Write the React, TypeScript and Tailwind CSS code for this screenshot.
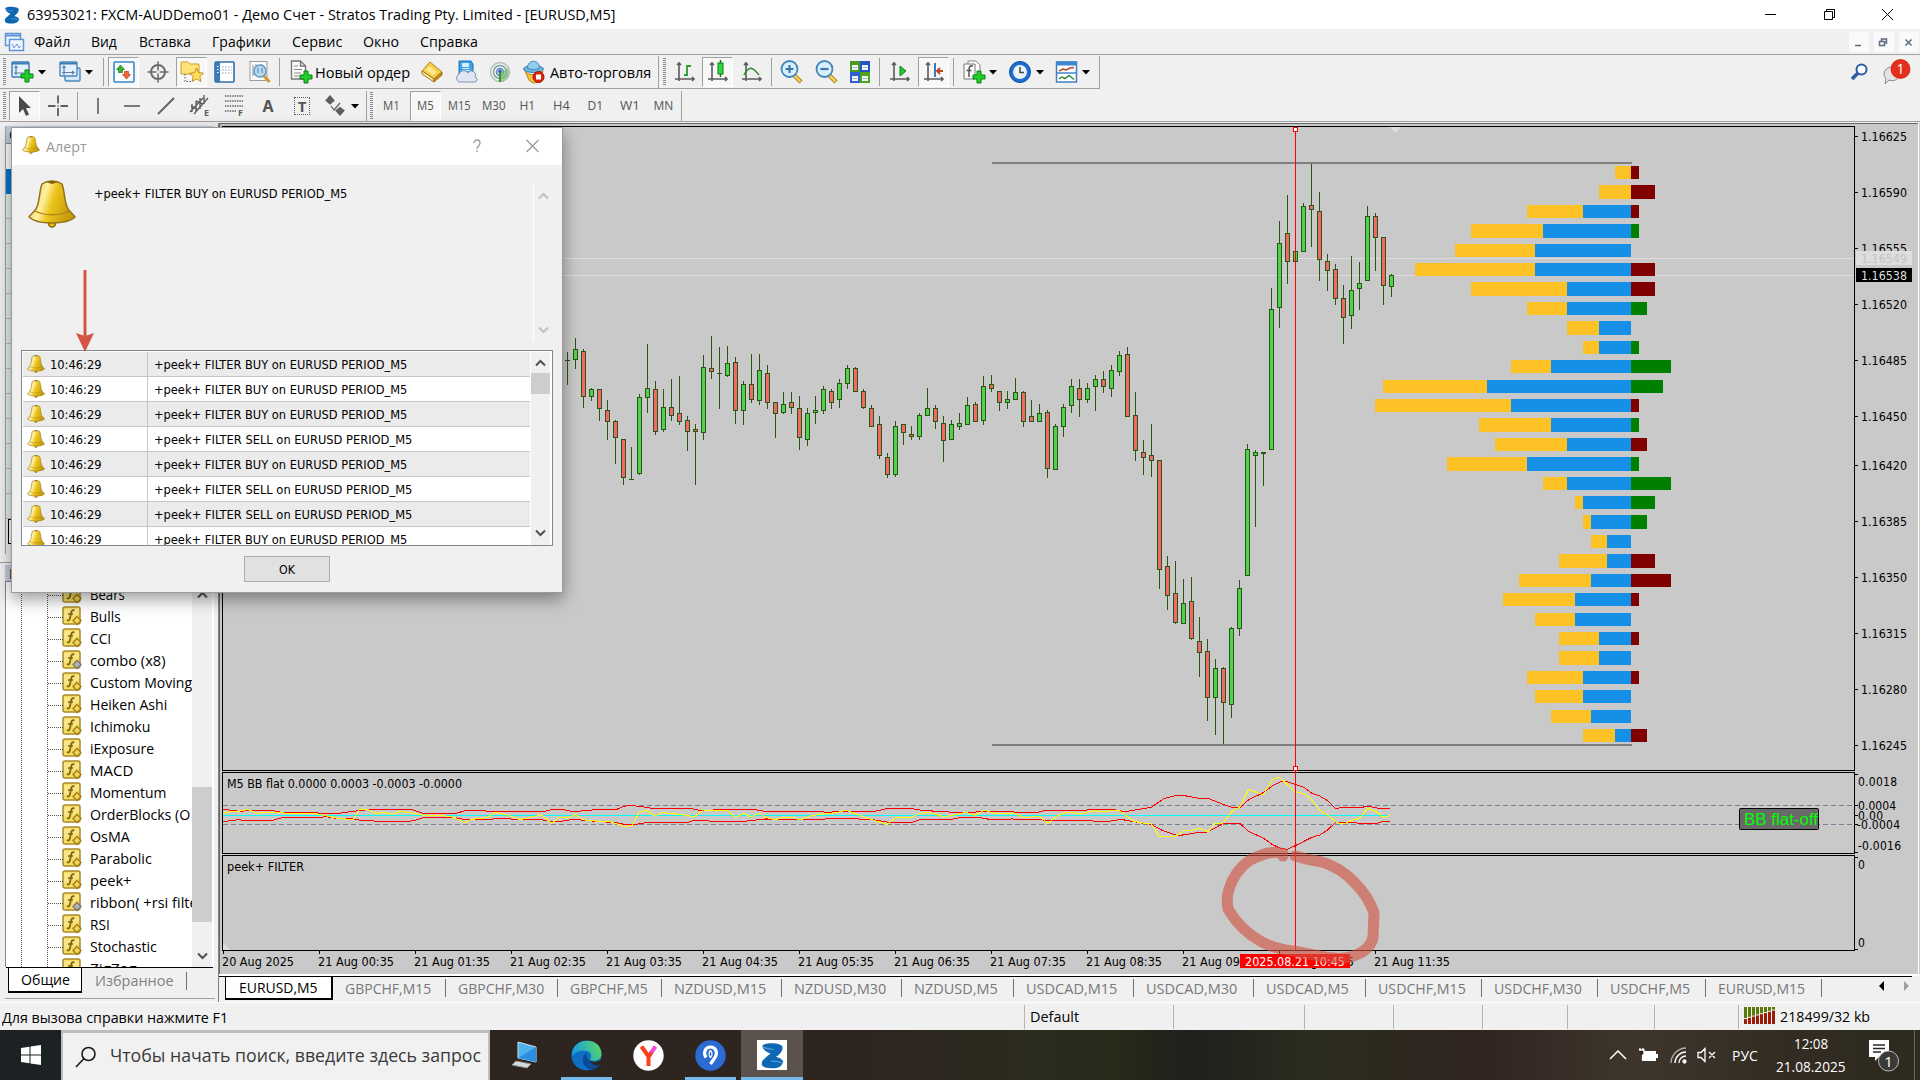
import { ReactNode, useLayoutEffect, useRef, useState } from 'react';

/* ---------- helpers ---------- */

type FitProps = { w: number; children: string; className?: string };

// one line of text squeezed or stretched to a fixed advance width
const Fit = ({ w, children, className = '' }: FitProps) => {
  const ref = useRef<HTMLSpanElement>(null);
  const [scale, setScale] = useState(1);

  useLayoutEffect(() => {
    if (ref.current) setScale(w / ref.current.offsetWidth);
  }, [w, children]);

  return (
    <span className="block shrink-0" style={{ width: w }}>
      <span
        ref={ref}
        className={`inline-block origin-left whitespace-pre align-top ${className}`}
        style={{ transform: `scaleX(${scale})` }}
      >
        {children}
      </span>
    </span>
  );
};

const Cell = ({ className, children }: { className: string; children?: ReactNode }) => (
  <div className={`flex h-full shrink-0 items-center justify-center ${className}`}>{children}</div>
);

const Pressed = ({ className = 'w-[31px]', children }: { className?: string; children: ReactNode }) => (
  <div
    className={`flex h-[30px] shrink-0 items-center justify-center border border-t-[#a0a0a0] border-l-[#a0a0a0] border-r-white border-b-white bg-[#f7f7f7] ${className}`}
  >
    {children}
  </div>
);

const Sep = ({ className = '' }: { className?: string }) => (
  <div className={`h-[28px] w-px shrink-0 bg-[#a0a0a0] ${className}`} />
);

const Edge = ({ className = '' }: { className?: string }) => (
  <div className={`h-full w-px shrink-0 bg-[#a0a0a0] ${className}`} />
);

const Grip = ({ className }: { className: string }) => (
  <Cell className={className}>
    <svg width="3" height="28" viewBox="0 0 3 28">
      <path d="M1.500 0V28" stroke="#8c8c8c" strokeWidth="3" strokeDasharray="1 1" />
    </svg>
  </Cell>
);

const Caret = ({ className = 'w-[12px]' }: { className?: string }) => (
  <Cell className={className}>
    <svg width="8" height="5" viewBox="0 0 8 5">
      <path d="M0 0H8L4 4.500Z" fill="#000" />
    </svg>
  </Cell>
);

const Ico = ({ children, size = 24 }: { children: ReactNode; size?: number }) => (
  <svg width={size} height={size} viewBox="0 0 24 24" fill="none" className="shrink-0">
    {children}
  </svg>
);

const Plus = ({ x, y }: { x: number; y: number }) => (
  <path
    d={`M${x + 4} ${y}h4v4h4v4h-4v4h-4v-4h-4v-4h4z`}
    fill="#1fd02c"
    stroke="#0a7d12"
    strokeWidth="1"
  />
);

/* ---------- toolbar icons ---------- */

const NewChartIcon = () => (
  <Ico>
    <rect x="2" y="2" width="17" height="15" rx="1" fill="#e4f0fb" stroke="#3a7cb8" strokeWidth="1.400" />
    <path d="M2 3.500h17" stroke="#3a7cb8" strokeWidth="2" />
    <path d="M6 6v9M4 13h10M4.500 8L6 6l1.500 2" stroke="#5b7fa6" strokeWidth="1.200" />
    <Plus x={11} y={10} />
  </Ico>
);

const ProfilesIcon = () => (
  <Ico>
    <rect x="7" y="8" width="15" height="13" rx="1" fill="#d7e9f8" stroke="#4d86b8" strokeWidth="1.400" />
    <rect x="2" y="2" width="17" height="14" rx="1" fill="#e4f0fb" stroke="#4d86b8" strokeWidth="1.400" />
    <path d="M2 3.500h17" stroke="#3a7cb8" strokeWidth="2" />
    <path d="M6 6v9M4 12.500h12M4.500 8L6 6l1.500 2M14 11l2 1.500-2 1.500" stroke="#5b7fa6" strokeWidth="1.200" />
  </Ico>
);

const MarketIcon = () => (
  <Ico>
    <rect x="2" y="2" width="20" height="20" rx="1" fill="#fdfdfd" stroke="#3d86c6" strokeWidth="1.600" />
    <path d="M8.500 5l4 4.500h-2v3h-4v-3h-2z" fill="#35b135" stroke="#157a15" strokeWidth=".7" />
    <path d="M14.500 19l-4-4.500h2v-3h4v3h2z" fill="#f0643c" stroke="#b93a17" strokeWidth=".7" />
  </Ico>
);

const TargetIcon = () => (
  <Ico>
    <circle cx="12" cy="12" r="7" stroke="#6c6c6c" strokeWidth="2" />
    <path d="M12 1.500v9M12 13.500v9M1.500 12h9M13.500 12h9" stroke="#6c6c6c" strokeWidth="1.600" />
  </Ico>
);

const Star = ({ x, y }: { x: number; y: number }) => (
  <path
    transform={`translate(${x} ${y})`}
    d="M7 0l2 4.700 5 .5-3.700 3.300 1.100 5L7 10.900 2.600 13.500l1.100-5L0 5.200l5-.5z"
    fill="#ffdc5c"
    stroke="#b58a16"
    strokeWidth=".9"
  />
);

const NavigatorIcon = () => (
  <Ico>
    <path d="M1 2h7l2 2h9v10H1z" fill="#ffe27a" stroke="#cba02c" />
    <path d="M5 14v7.500h6" stroke="#555" strokeDasharray="1.500 1.500" />
    <Star x={9.5} y={8} />
  </Ico>
);

const DataIcon = () => (
  <Ico>
    <rect x="2" y="2" width="19" height="20" rx="1" fill="#fff" stroke="#2f6ea8" strokeWidth="1.600" />
    <rect x="2" y="2" width="5" height="20" fill="#3a7cb8" />
    <path d="M9 7h10M9 10h10M9 13h10" stroke="#9db8d2" strokeDasharray="2 1" />
    <path d="M4 6.500h1.500M4 9.500h1.500M4 12.500h1.500" stroke="#fff" />
  </Ico>
);

const TesterIcon = () => (
  <Ico>
    <rect x="2" y="1.500" width="17" height="19" fill="#fafafa" stroke="#9c9c9c" />
    <path d="M5 5v11M8 4v9M14 4v6" stroke="#7d8ea0" />
    <path d="M15.500 15.500l6 6.500" stroke="#d59a2a" strokeWidth="3" />
    <circle cx="12" cy="11" r="6" fill="#b8dbf2" stroke="#6898be" strokeWidth="1.500" />
    <path d="M10 8v5M14 8v5" stroke="#4b82b0" />
  </Ico>
);

const OrderIcon = () => (
  <Ico>
    <path d="M2.500 1h9l5 5v13h-14z" fill="#fbfbfb" stroke="#777" strokeWidth="1.400" />
    <path d="M11.500 1v5h5" stroke="#777" strokeWidth="1.400" />
    <path d="M5 6h4M5 9.500h8M5 13h7M5 16h5" stroke="#888" strokeWidth="1.200" />
    <Plus x={11} y={11} />
  </Ico>
);

const BookIcon = () => (
  <Ico>
    <path d="M10 2l12 10-8 7L2 11z" fill="#f6cf4b" stroke="#b3801a" />
    <path d="M2 11v3l12 8v-3z" fill="#fff3c4" stroke="#a36f12" />
    <path d="M14 19l8-7v3l-8 7z" fill="#c98f1d" stroke="#a36f12" />
    <path d="M9 6l8 6-4 3-7-5z" fill="#ffe892" />
  </Ico>
);

const CloudIcon = () => (
  <Ico>
    <path d="M5 1h12l2 3v10H5z" fill="#3ea2e6" stroke="#1a6eb4" />
    <path d="M8.500 3.500h6v3h-6zM8.500 8.500h7M8.500 10.500h7" fill="#d8eefb" stroke="#d8eefb" />
    <path d="M5 22a4.500 4.500 0 010-8 5 5 0 019-1 4 4 0 017 4 2.500 2.500 0 01-1 5z" fill="#dfe6f2" stroke="#8095b8" />
  </Ico>
);

const SignalIcon = () => (
  <Ico>
    <circle cx="12" cy="12" r="9.500" stroke="#b9bfc0" strokeWidth="1.500" />
    <circle cx="12" cy="12" r="6.500" stroke="#7fa6a0" strokeWidth="1.500" />
    <circle cx="12" cy="12" r="3.500" stroke="#5d86c8" strokeWidth="1.500" />
    <path d="M12 12v10a10 10 0 008-14z" fill="#6fba6b" opacity=".6" />
    <circle cx="12" cy="11.500" r="2" fill="#3b66b0" />
    <path d="M12 12v10" stroke="#2f9b2f" strokeWidth="2" />
  </Ico>
);

const AutoIcon = () => (
  <Ico>
    <path d="M3 11c4 5 12 5 18 0l-2 8c-4 5-9 5-12 1z" fill="#f4c53b" stroke="#b98615" />
    <ellipse cx="11.500" cy="9" rx="10" ry="3.500" fill="#6bb4dd" stroke="#3c86b1" />
    <path d="M5.500 8c0-9 12-9 12 0-3 2-9 2-12 0z" fill="#8fcdee" stroke="#3c86b1" />
    <circle cx="16.500" cy="17" r="5.500" fill="#e2230c" stroke="#a31505" />
    <rect x="14" y="14.500" width="5" height="5" fill="#fff" />
  </Ico>
);

const Axes = () => (
  <path d="M6 3v18M2 19h19M4 5l2-2 2 2M19 17l2 2-2 2" stroke="#5b5b5b" strokeWidth="1.600" />
);

const BarsIcon = () => (
  <Ico>
    <Axes />
    <path d="M14 5v11M14 6h4M11 15h3" stroke="#249b2c" strokeWidth="1.800" />
  </Ico>
);

const CandleIcon = () => (
  <Ico>
    <Axes />
    <path d="M14.500 0v17" stroke="#0d7a15" strokeWidth="1.500" />
    <rect x="12" y="3" width="5" height="11" fill="#2edb3b" stroke="#0d7a15" />
  </Ico>
);

const LineIcon = () => (
  <Ico>
    <Axes />
    <path d="M4 15c5-9 8-9 15 0" stroke="#2b8a2f" strokeWidth="1.500" />
  </Ico>
);

const ZoomIcon = ({ plus }: { plus?: boolean }) => (
  <Ico>
    <path d="M14 14l8 8" stroke="#a87a1a" strokeWidth="4.500" />
    <path d="M14 14l7.500 7.500" stroke="#f7d24f" strokeWidth="2.500" />
    <circle cx="10.500" cy="9" r="8" fill="#d9effb" stroke="#3f86bb" strokeWidth="1.800" />
    <path d={plus ? 'M6.500 9h8M10.500 5v8' : 'M6.500 9h8'} stroke="#3a79ad" strokeWidth="2.200" />
  </Ico>
);

const TileIcon = () => (
  <Ico>
    <rect x="2" y="1" width="10" height="11" fill="#4c9a1f" />
    <rect x="12" y="1" width="10" height="11" fill="#2353c4" />
    <rect x="2" y="12" width="10" height="11" fill="#2f5fd0" />
    <rect x="12" y="12" width="10" height="11" fill="#4fa31f" />
    <path d="M4 5h6v5H4zM14 5h6v5h-6zM4 16h6v5H4zM14 16h6v5h-6z" fill="#eef4fb" />
    <path d="M5 7.500h4M15 7.500h4M5 18.500h4M15 18.500h4" stroke="#9fb3c8" />
  </Ico>
);

const ScrollIcon = () => (
  <Ico>
    <Axes />
    <path d="M12 6l6 5-6 5z" fill="#23c531" stroke="#12851c" />
  </Ico>
);

const ShiftIcon = () => (
  <Ico>
    <Axes />
    <path d="M13 3v14" stroke="#1f6fb0" strokeWidth="1.800" />
    <path d="M21 11h-6M18 8l-3 3 3 3" stroke="#c4401a" strokeWidth="1.800" />
  </Ico>
);

const IndicatorsIcon = () => (
  <Ico>
    <path d="M6 1h8l4 4v12H6z" fill="#fff" stroke="#888" />
    <path d="M2 4h11v15H2z" fill="#fbfbfb" stroke="#777" />
    <path d="M11 6c-3-1-4 1-4 4v7M4.500 10.500h5" stroke="#555" strokeWidth="1.500" />
    <Plus x={11} y={11} />
  </Ico>
);

const ClockIcon = () => (
  <Ico>
    <circle cx="12" cy="12" r="10.500" fill="#1a6fd0" stroke="#0d4a96" />
    <circle cx="12" cy="12" r="7" fill="#eaf4fd" />
    <path d="M12 7v5.500h4" stroke="#444" strokeWidth="1.500" />
  </Ico>
);

const TemplateIcon = () => (
  <Ico>
    <rect x="1.500" y="2" width="20" height="20" fill="#fff" stroke="#3d7fc2" strokeWidth="1.500" />
    <path d="M1 3.500h21" stroke="#3d86d0" strokeWidth="4" />
    <path d="M1 13h21" stroke="#3d86d0" strokeWidth="1.500" />
    <path d="M4 11l4-2 3 1 4-2 4-.5" stroke="#b3472a" strokeWidth="1.500" />
    <path d="M4 19l3-2 3 1.500 4-3 5 4" stroke="#2f8a3a" strokeWidth="1.500" />
  </Ico>
);

const BellIcon = ({ size = 18 }: { size?: number }) => (
  <svg width={size} height={size} viewBox="0 0 48 48" className="shrink-0">
    <defs>
      <linearGradient id="bell" x1="0" x2="1" y1="0" y2=".3">
        <stop offset="0" stopColor="#e8c43a" />
        <stop offset=".4" stopColor="#fff0a0" />
        <stop offset=".6" stopColor="#ecc51c" />
        <stop offset="1" stopColor="#c79a0c" />
      </linearGradient>
    </defs>
    <circle cx="24" cy="43.500" r="3.500" fill="#e8bb1a" stroke="#8a6a10" strokeWidth="1.500" />
    <path
      d="M14 4C20 0 28 0 34 4c3 8 2 18 6 25 2 3 5 5 7 8-8 8-38 8-46 0 2-3 5-5 7-8 4-7 3-17 6-25z"
      fill="url(#bell)"
      stroke="#94721a"
      strokeWidth="1.500"
    />
    <path d="M7 31c10 5 24 5 34 0" fill="none" stroke="#a9851a" strokeWidth="1.300" />
    <path d="M19 2.500l5-2 5 2-5 1.500z" fill="#8a5f0a" />
  </svg>
);

const LogoIcon = ({ size }: { size: number }) => (
  <svg width={size} height={size} viewBox="0 0 20 20" className="shrink-0">
    <path
      d="M2.500 3c0-3 15-3 15 1 0 3-2 5-5 7 2 .5 4.500 1.500 5.500 3.500-1 4-4 5-8 5-5 0-8-1-8-3.500 0-3 4-5 6.500-7.500C7 8 3 6.500 2.500 3z"
      fill="#0d67b2"
    />
    <path d="M3 3.500c3 2 5 1.500 8 2M17 15.500c-3-1.500-5-1-8-1.500" stroke="#5ba3dc" strokeWidth=".8" fill="none" />
  </svg>
);

const Chevron = ({ up, color = '#505050' }: { up?: boolean; color?: string }) => (
  <svg width="11" height="8" viewBox="0 0 11 8" fill="none" className="shrink-0">
    <path d={up ? 'M1 6.500L5.500 2L10 6.500' : 'M1 1.500L5.500 6L10 1.500'} stroke={color} strokeWidth="2" />
  </svg>
);

/* ---------- bars above the workspace ---------- */

const TitleBar = () => (
  <div className="flex h-[29px] items-center bg-white text-[15px] text-black">
    <div className="ml-[3px] flex w-[24px]">
      <LogoIcon size={18} />
    </div>
    <Fit w={588}>63953021: FXCM-AUDDemo01 - Демо Счет - Stratos Trading Pty. Limited - [EURUSD,M5]</Fit>
    <svg className="mr-[26px] mb-px ml-auto" width="130" height="14" viewBox="0 0 130 14" fill="none" stroke="#000">
      <path d="M1 7.500h11" />
      <path d="M60.500 4.500h8v8h-8zM62.500 4.500v-2h8v8h-2" />
      <path d="M118 2l11 11M129 2l-11 11" />
    </svg>
  </div>
);

const menu: { label: string; w: number; ml: string }[] = [
  { label: 'Файл', w: 36, ml: 'ml-[9px]' },
  { label: 'Вид', w: 26, ml: 'ml-[21px]' },
  { label: 'Вставка', w: 52, ml: 'ml-[22px]' },
  { label: 'Графики', w: 59, ml: 'ml-[21px]' },
  { label: 'Сервис', w: 50, ml: 'ml-[21px]' },
  { label: 'Окно', w: 36, ml: 'ml-[21px]' },
  { label: 'Справка', w: 58, ml: 'ml-[21px]' },
];

const MenuBar = () => (
  <div className="flex h-[26px] items-center border-b border-[#a0a0a0] text-[15px]">
    <svg className="ml-[4px]" width="21" height="20" viewBox="0 0 21 20" fill="none" stroke="#5f93d8">
      <rect x="1.500" y="1.500" width="15" height="12" fill="#e9f2fd" strokeWidth="1.500" />
      <path d="M1 3.500h16" strokeWidth="2" />
      <rect x="5.500" y="7.500" width="14" height="11" fill="#f4f8fe" strokeWidth="1.500" />
      <path d="M8 12l2 4 3-4 2 4 2-2" />
    </svg>
    {menu.map((m) => (
      <div key={m.label} className={m.ml}>
        <Fit w={m.w}>{m.label}</Fit>
      </div>
    ))}
    <div className="mr-px ml-auto flex gap-[5px]">
      {['M4 12.500h6', 'M3.500 8.500h5v4h-5zM5.500 8v-2h5v4h-2', 'M4.500 6.500l6 6M10.500 6.500l-6 6'].map((d) => (
        <svg key={d} width="20" height="20" viewBox="-2 -1 20 20" className="bg-[#fafafa]" fill="none">
          <path d={d} stroke="#5a6b80" strokeWidth="1.500" />
        </svg>
      ))}
    </div>
  </div>
);

const MainToolbar = () => (
  <div className="flex h-[34px] items-center">
    <div className="flex h-full items-center border-b border-[#a0a0a0] pt-px text-[15px]">
      <Grip className="w-[8px]" />
      <Cell className="w-[28px]"><NewChartIcon /></Cell>
      <Caret />
      <Cell className="ml-[9px] w-[26px]"><ProfilesIcon /></Cell>
      <Caret />
      <Sep className="ml-[8px]" />
      <Pressed className="ml-[4px] w-[31px]"><MarketIcon /></Pressed>
      <Cell className="w-[37px]"><TargetIcon /></Cell>
      <Pressed><NavigatorIcon /></Pressed>
      <Cell className="w-[36px]"><DataIcon /></Cell>
      <Cell className="w-[34px]"><TesterIcon /></Cell>
      <Sep className="ml-[2px]" />
      <Cell className="ml-[8px] w-[26px]"><OrderIcon /></Cell>
      <div className="ml-px"><Fit w={95}>Новый ордер</Fit></div>
      <Cell className="ml-[5px] w-[34px]"><BookIcon /></Cell>
      <Cell className="w-[34px]"><CloudIcon /></Cell>
      <Cell className="w-[34px]"><SignalIcon /></Cell>
      <Cell className="w-[33px]"><AutoIcon /></Cell>
      <Fit w={101}>Авто-торговля</Fit>
      <Edge className="ml-[7px]" />
      <Grip className="ml-[2px] w-[6px]" />
      <Cell className="w-[35px]"><BarsIcon /></Cell>
      <Pressed><CandleIcon /></Pressed>
      <Cell className="w-[38px]"><LineIcon /></Cell>
      <Sep />
      <Cell className="w-[38px]"><ZoomIcon plus /></Cell>
      <Cell className="w-[32px]"><ZoomIcon /></Cell>
      <Cell className="w-[35px]"><TileIcon /></Cell>
      <Sep className="ml-[2px]" />
      <Cell className="w-[40px]"><ScrollIcon /></Cell>
      <Pressed className="-ml-[2px] w-[31px]"><ShiftIcon /></Pressed>
      <Sep className="ml-[4px]" />
      <Cell className="ml-[7px] w-[26px]"><IndicatorsIcon /></Cell>
      <Caret />
      <Cell className="ml-[8px] w-[26px]"><ClockIcon /></Cell>
      <Caret className="ml-px w-[12px]" />
      <Cell className="ml-[8px] w-[26px]"><TemplateIcon /></Cell>
      <Caret />
      <Edge className="ml-[7px]" />
    </div>
    <div className="mr-[8px] ml-auto flex items-center gap-[12px]">
      <svg width="20" height="20" viewBox="0 0 20 20" fill="none">
        <path d="M8 11l-6 6" stroke="#2c5aa8" strokeWidth="3.500" />
        <circle cx="11.500" cy="7.500" r="5" fill="#fff" stroke="#2c5aa8" strokeWidth="2" />
      </svg>
      <svg width="30" height="28" viewBox="0 0 30 28">
        <path d="M2 16a8 7 0 0116 0c0 5-6 8-11 6l-4 4 1-5c-1-1-2-3-2-5z" fill="#e4e4e4" stroke="#8c8c8c" />
        <circle cx="18.500" cy="11" r="10" fill="#e2301c" />
        <text x="18.500" y="16" textAnchor="middle" fontSize="14" fill="#fff">1</text>
      </svg>
    </div>
  </div>
);

const g = '#5e5e5e';

const DrawToolbar = () => (
  <div className="flex h-[33px] items-center border-b border-[#a0a0a0] pt-[2px] text-[12px] font-medium text-[#555]">
    <Grip className="w-[8px]" />
    <Pressed className="ml-px w-[31px]">
      <Ico><path d="M6 2v17l4-4 3 7 3-1.500-3-6.500h5z" fill="#4a4a4a" /></Ico>
    </Pressed>
    <Cell className="w-[35px]">
      <Ico><path d="M12 1.500v8M12 14v8M2 12h7.500M14.500 12h7.500M11.500 12h1" stroke={g} strokeWidth="1.800" /></Ico>
    </Cell>
    <Sep className="ml-[2px]" />
    <Cell className="ml-[3px] w-[34px]">
      <Ico><path d="M12 4v16" stroke={g} strokeWidth="1.600" /></Ico>
    </Cell>
    <Cell className="w-[34px]">
      <Ico><path d="M4 12h16" stroke={g} strokeWidth="1.600" /></Ico>
    </Cell>
    <Cell className="w-[34px]">
      <Ico><path d="M4 20L20 4" stroke={g} strokeWidth="1.800" /></Ico>
    </Cell>
    <Cell className="w-[34px]">
      <Ico>
        <path d="M2 18L15 4M6 20L20 4M4 10v8M8 7v11M12 4v11M16 1v9M3 12l6 3M8 7l7 3" stroke={g} strokeWidth="1.400" />
        <text x="16" y="22" fontSize="9" fontWeight="bold" fill={g}>E</text>
      </Ico>
    </Cell>
    <Cell className="w-[34px]">
      <Ico>
        <path d="M3 2h18M3 7h18M3 12h18M3 17h11" stroke={g} strokeWidth="1.400" strokeDasharray="1.400 1" />
        <text x="16" y="22" fontSize="9" fontWeight="bold" fill={g}>F</text>
      </Ico>
    </Cell>
    <Cell className="w-[34px] font-['Noto_Sans','Open_Sans',sans-serif] text-[16px] font-bold">A</Cell>
    <Cell className="w-[34px]">
      <div className="flex h-[18px] w-[16px] items-center justify-center border border-dotted border-[#5e5e5e] text-[15px] leading-none font-bold">
        T
      </div>
    </Cell>
    <Cell className="w-[32px]">
      <Ico>
        <path d="M7 2l4 4.500L7 10 3 6.500zM17 21l4-4.500-4-3-4 3zM8 12l3 4 6-7" stroke={g} strokeWidth="1.200" />
        <path d="M7 2l4 4.500L7 10 3 6.500zM17 21l4-4.500-4-3-4 3z" fill={g} />
      </Ico>
    </Cell>
    <Caret className="-ml-[2px] w-[12px]" />
    <Edge className="ml-[5px]" />
    <Grip className="ml-px w-[6px]" />
    <Cell className="w-[34px]"><Fit w={17}>M1</Fit></Cell>
    <Pressed className="ml-[2px] w-[31px]"><Fit w={17}>M5</Fit></Pressed>
    <Cell className="ml-px w-[35px]"><Fit w={23}>M15</Fit></Cell>
    <Cell className="w-[33px]"><Fit w={24}>M30</Fit></Cell>
    <Cell className="w-[35px]"><Fit w={16}>H1</Fit></Cell>
    <Cell className="w-[33px]"><Fit w={17}>H4</Fit></Cell>
    <Cell className="w-[35px]"><Fit w={16}>D1</Fit></Cell>
    <Cell className="w-[34px]"><Fit w={20}>W1</Fit></Cell>
    <Cell className="w-[33px]"><Fit w={20}>MN</Fit></Cell>
    <Edge className="ml-px" />
  </div>
);

/* ---------- left column ---------- */

const tree: { name: string; w: number; gray?: boolean }[] = [
  { name: 'Bears', w: 35 },
  { name: 'Bulls', w: 31 },
  { name: 'CCI', w: 21 },
  { name: 'combo (x8)', w: 75, gray: true },
  { name: 'Custom Moving', w: 102 },
  { name: 'Heiken Ashi', w: 77 },
  { name: 'Ichimoku', w: 60 },
  { name: 'iExposure', w: 64 },
  { name: 'MACD', w: 43 },
  { name: 'Momentum', w: 76 },
  { name: 'OrderBlocks (O', w: 100 },
  { name: 'OsMA', w: 40 },
  { name: 'Parabolic', w: 62 },
  { name: 'peek+', w: 41 },
  { name: 'ribbon( +rsi filte', w: 108, gray: true },
  { name: 'RSI', w: 20 },
  { name: 'Stochastic', w: 67 },
  { name: 'ZigZag', w: 47 },
];

const FunctionIcon = ({ gray }: { gray?: boolean }) => (
  <svg width="20" height="20" viewBox="0 0 20 20" className="shrink-0">
    <rect x="1" y="1" width="17" height="17" rx="2" fill="#f5dc62" stroke="#a88a2c" strokeWidth="1.500" />
    <path d="M2 3h15v5L2 13z" fill="#fbeb9b" opacity=".6" />
    <path d="M12.500 4.500c-2-1-3 0-3.500 3L8 12c-.5 2.500-1.500 3-3 2M6 8h5" fill="none" stroke="#7d6010" strokeWidth="1.700" />
    <path
      d="M15 10.500l4 4-4 4-4-4z"
      fill={gray ? '#b5b5b5' : '#f3d558'}
      stroke={gray ? '#777' : '#a07d18'}
      strokeWidth="1.300"
    />
  </svg>
);

const MarketWatch = () => (
  <div className="ml-[5px] h-[428px] w-[208px] border-l border-[#a0a0a0]">
    <div className="h-[17px] bg-[#bfcddb] pl-[3px] text-[14px] leading-[17px]">Обзор рынка</div>
    <div className="h-[26px] border-t border-[#828790] bg-white" />
    <div className="h-[25px] bg-[#0078d7]" />
    {Array.from({ length: 13 }, (_, i) => (
      <div key={i} className="h-[25px] border-b border-[#c0c0c0] bg-[#e6f2e6]" />
    ))}
    <div className="ml-[2px] h-[25px] w-[70px] border border-black bg-white" />
  </div>
);

const Navigator = () => (
  <div className="flex h-[436px] flex-col border-t border-[#a0a0a0] pt-[2px]">
    <div className="ml-[5px] flex h-[16px] w-[208px] items-center bg-[#bfcddb] pl-[4px] text-[14px]">Навигатор</div>
    <div className="ml-[5px] flex h-[386px] w-[209px] border border-r-0 border-b-0 border-[#828790] bg-white">
      <div className="relative w-[186px] overflow-hidden">
        <svg className="absolute top-0 left-0" width="60" height="386" viewBox="6 583 60 386" stroke="#555" fill="none">
          <path d="M21.500 583V969M47.500 583V969" strokeDasharray="1 1" />
          {tree.map((t, i) => (
            <path key={t.name} d={`M48 ${596.5 + i * 22}H63`} strokeDasharray="1 1" />
          ))}
        </svg>
        <div className="pt-px pl-[56px]">
          {tree.map((t) => (
            <div key={t.name} className="flex h-[22px] items-center gap-[8px] text-[15px]">
              <FunctionIcon gray={t.gray} />
              <Fit w={t.w}>{t.name}</Fit>
            </div>
          ))}
        </div>
      </div>
      <div className="flex w-[20px] flex-col items-center bg-[#f0f0f0] pt-[9px] pb-[7px]">
        <Chevron up />
        <div className="mt-[188px] h-[135px] w-[20px] bg-[#cdcdcd]" />
        <div className="mt-auto">
          <Chevron />
        </div>
      </div>
    </div>
    <div className="ml-[6px] flex h-[27px] w-[207px] border-t border-black text-[15px]">
      <div className="ml-[2px] flex h-[25px] w-[74px] items-center justify-center border-x border-b-2 border-black bg-white">
        <Fit w={49}>Общие</Fit>
      </div>
      <div className="ml-[13px] flex h-[24px] items-center text-[#808080]">
        <Fit w={79}>Избранное</Fit>
      </div>
      <div className="mt-[4px] ml-[12px] h-[18px] w-px bg-[#707070]" />
    </div>
  </div>
);

/* ---------- chart ---------- */

// high, body top, body bottom, low (1 = rising, 0 = falling)
const candles: [number, number, number, number, 0 | 1][] = [
  [352, 360, 361, 385, 1], [338, 349, 360, 369, 1], [349, 351, 397, 408, 0], [388, 389, 397, 401, 1],
  [389, 389, 409, 421, 0], [400, 410, 422, 440, 0], [420, 421, 438, 464, 0], [439, 439, 478, 485, 0],
  [447, 479, 480, 480, 1], [394, 397, 474, 475, 1], [344, 388, 398, 413, 1], [381, 389, 432, 435, 0],
  [389, 407, 430, 432, 1], [379, 407, 416, 421, 0], [376, 413, 422, 425, 0], [416, 420, 432, 451, 0],
  [424, 429, 432, 485, 0], [355, 367, 433, 440, 1], [336, 368, 372, 379, 0], [347, 373, 374, 409, 1],
  [346, 363, 376, 377, 1], [357, 362, 411, 424, 0], [381, 384, 411, 425, 1], [354, 384, 400, 403, 0],
  [354, 370, 401, 405, 1], [365, 373, 403, 409, 0], [402, 402, 414, 438, 0], [392, 404, 413, 414, 1],
  [392, 402, 408, 414, 0], [396, 408, 438, 450, 0], [408, 413, 440, 446, 1], [396, 410, 413, 424, 1],
  [386, 389, 411, 414, 1], [389, 391, 403, 409, 0], [379, 383, 400, 408, 1], [365, 368, 384, 389, 1],
  [367, 368, 392, 392, 0], [389, 391, 408, 409, 0], [405, 408, 427, 427, 0], [416, 424, 456, 459, 0],
  [453, 457, 475, 478, 0], [421, 426, 475, 477, 1], [424, 424, 433, 445, 0], [426, 434, 437, 440, 0],
  [413, 415, 437, 440, 1], [388, 408, 416, 416, 1], [405, 408, 422, 429, 0], [416, 423, 441, 462, 0],
  [420, 424, 440, 440, 1], [413, 423, 427, 430, 1], [397, 405, 425, 425, 1], [402, 404, 422, 422, 0],
  [376, 386, 421, 425, 1], [375, 384, 389, 392, 0], [391, 391, 403, 411, 0], [391, 399, 403, 409, 1],
  [378, 392, 400, 400, 1], [391, 392, 422, 427, 0], [400, 416, 422, 422, 0], [404, 413, 422, 422, 1],
  [410, 412, 469, 478, 0], [424, 426, 470, 470, 1], [404, 407, 427, 437, 1], [379, 386, 406, 413, 1],
  [379, 388, 400, 417, 0], [383, 388, 400, 403, 1], [375, 379, 387, 411, 1], [371, 379, 387, 393, 0],
  [365, 370, 389, 397, 1], [351, 355, 372, 376, 1], [347, 354, 417, 417, 0], [392, 415, 451, 461, 0],
  [440, 452, 458, 475, 0], [424, 455, 461, 477, 0], [460, 460, 570, 589, 0], [556, 566, 596, 610, 0],
  [561, 593, 623, 624, 0], [579, 603, 624, 624, 1], [577, 601, 639, 640, 0], [617, 641, 653, 677, 0],
  [639, 651, 698, 721, 0], [659, 668, 698, 735, 1], [667, 668, 703, 744, 0], [627, 628, 705, 718, 1],
  [580, 588, 629, 636, 1], [444, 449, 576, 576, 1], [450, 452, 456, 527, 1], [452, 452, 454, 486, 1],
  [288, 309, 450, 450, 1], [221, 243, 308, 328, 1], [195, 233, 262, 284, 0], [251, 251, 262, 262, 1],
  [203, 206, 252, 252, 1], [164, 205, 210, 247, 0], [192, 211, 260, 281, 0], [254, 261, 271, 291, 0],
  [264, 269, 299, 305, 0], [285, 298, 318, 344, 0], [256, 290, 316, 329, 1], [262, 283, 289, 310, 1],
  [206, 216, 281, 281, 1], [213, 216, 238, 271, 0], [237, 237, 286, 305, 0], [274, 275, 287, 297, 1],
];

// total, buy volume, delta (negative = red), in steps of 8px
const profile: [number, number, number][] = [
  [2, 0, -1], [4, 0, -3], [13, 6, -1], [20, 11, 1], [22, 12, 0], [27, 12, -3], [20, 8, -3], [13, 8, 2],
  [8, 4, 0], [6, 4, 1], [15, 10, 5], [31, 18, 4], [32, 15, -1], [19, 10, 1], [17, 8, -2], [23, 13, 1],
  [11, 8, 5], [7, 6, 3], [6, 5, 2], [5, 3, 0], [9, 3, -3], [14, 5, -5], [16, 7, -1], [12, 7, 0],
  [9, 4, -1], [9, 4, 0], [13, 6, -1], [12, 6, 0], [10, 5, 0], [6, 2, -2],
];

const prices: [string, number][] = [
  ['1.16625', 136], ['1.16590', 192], ['1.16555', 248], ['1.16520', 304], ['1.16485', 360], ['1.16450', 416],
  ['1.16420', 465], ['1.16385', 521], ['1.16350', 577], ['1.16315', 633], ['1.16280', 689], ['1.16245', 745],
];

type Pts = [number, number][];

// each band is stored in two stretches: the quiet night session and the morning move
const upper: [Pts, Pts] = [
  [[5, 148], [35, 154], [50, 152], [92, 152], [108, 157], [160, 158], [180, 160], [206, 160], [245, 151], [262, 149], [334, 149], [354, 160], [410, 160], [428, 152], [460, 152], [468, 154], [562, 155], [578, 149], [597, 149], [617, 155], [655, 149], [690, 149], [703, 139], [716, 136], [738, 141], [757, 146], [820, 146], [840, 152], [868, 149], [932, 149], [952, 155], [1045, 155], [1058, 157], [1075, 155], [1138, 155], [1162, 146], [1206, 146], [1222, 151], [1260, 155], [1290, 158], [1330, 155], [1376, 155], [1395, 158], [1425, 157], [1437, 151], [1500, 151], [1520, 149]],
  [[0, 148], [30, 150], [48, 155], [98, 142], [122, 116], [144, 107], [162, 107], [186, 114], [208, 116], [234, 132], [250, 141], [268, 142], [285, 118], [310, 100], [330, 77], [345, 65], [358, 65], [391, 83], [405, 100], [420, 108], [435, 122], [450, 145], [470, 142], [500, 142], [512, 139], [530, 144], [555, 146]],
];

const lower: [Pts, Pts] = [
  [[5, 185], [32, 179], [45, 182], [92, 181], [108, 173], [170, 173], [185, 170], [206, 176], [228, 176], [245, 181], [280, 184], [330, 184], [340, 181], [354, 173], [410, 173], [428, 179], [500, 176], [520, 179], [560, 179], [576, 184], [595, 184], [615, 178], [655, 184], [690, 188], [704, 193], [725, 193], [745, 187], [815, 187], [825, 181], [865, 184], [912, 184], [950, 177], [1045, 178], [1070, 175], [1135, 178], [1165, 187], [1205, 187], [1220, 179], [1275, 178], [1290, 172], [1322, 172], [1340, 178], [1380, 177], [1425, 178], [1437, 181], [1515, 182], [1525, 184]],
  [[0, 185], [18, 184], [40, 178], [60, 184], [98, 193], [120, 212], [150, 227], [185, 218], [205, 216], [234, 192], [250, 190], [267, 190], [284, 214], [312, 234], [330, 254], [345, 265], [358, 268], [380, 252], [405, 232], [420, 225], [435, 210], [450, 188], [530, 190], [542, 184], [555, 184]],
];

const flat: [Pts, Pts] = [
  [[5, 160], [20, 154], [33, 154], [48, 148], [64, 160], [78, 156], [105, 157], [115, 160], [165, 161], [178, 165], [205, 175], [232, 179], [243, 148], [258, 149], [272, 160], [285, 157], [300, 163], [314, 154], [332, 158], [360, 168], [390, 167], [408, 172], [425, 188], [438, 178], [465, 173], [480, 157], [498, 164], [512, 172], [523, 179], [560, 165], [578, 190], [590, 173], [608, 172], [619, 164], [635, 180], [660, 184], [680, 185], [705, 200], [718, 196], [730, 158], [743, 151], [758, 168], [770, 158], [805, 164], [826, 170], [842, 150], [884, 152], [898, 172], [912, 160], [925, 170], [940, 160], [952, 173], [967, 179], [980, 173], [1000, 173], [1010, 180], [1030, 167], [1060, 160], [1075, 158], [1090, 151], [1110, 163], [1130, 176], [1162, 193], [1177, 173], [1205, 172], [1218, 160], [1235, 157], [1262, 170], [1285, 163], [1300, 157], [1315, 166], [1332, 151], [1350, 160], [1385, 161], [1400, 172], [1428, 170], [1442, 190], [1458, 168], [1475, 157], [1500, 161], [1525, 151]],
  [[0, 156], [20, 152], [36, 151], [65, 184], [85, 190], [98, 192], [113, 229], [145, 229], [160, 212], [175, 211], [190, 205], [207, 215], [220, 190], [235, 190], [252, 154], [268, 140], [284, 88], [312, 105], [330, 58], [343, 52], [372, 94], [391, 102], [402, 115], [420, 151], [436, 166], [453, 188], [466, 192], [482, 181], [495, 176], [512, 145], [528, 155], [543, 172], [555, 166]],
];

const toPoints = ([night, morning]: [Pts, Pts]) =>
  [
    ...night.map(([x, y]) => `${220 + x / 1.742},${760 + y / 3}`),
    ...morning.map(([x, y]) => `${1100 + x / 1.912},${760 + y / 3}`),
  ].join(' ');

const Chart = () => (
  <svg
    width="1701"
    height="851"
    viewBox="219 123 1701 851"
    className="shrink-0 font-['DejaVu_Sans_Condensed','DejaVu_Sans',sans-serif]"
    fontSize="12"
  >
    <rect x="219" y="123" width="1701" height="852" fill="#c9c9c9" />
    <path d="M219 123.500H1918M219.500 123V975" stroke="#696969" />
    <path d="M1918.500 123V975" stroke="#fff" />

    <g shapeRendering="crispEdges">
      {/* price lines and extremes */}
      <path d="M223 258.500H1854M223 275.500H1854" stroke="#dedede" />
      <path d="M1390 127h11l-5.500 6z" fill="#dedede" />
      <path d="M223 943l7 7h-7z" fill="#dedede" />
      <path d="M992 163H1632M992 745H1632" stroke="#808080" strokeWidth="2" />

      {candles.map(([high, top, bottom, low, up], i) => {
        const x = 567 + i * 8;
        return (
          <g key={i}>
            <rect x={x} y={high} width="1" height={low - high} fill="#275713" />
            <rect x={x - 2} y={top} width="5" height={bottom - top} fill="#275713" />
            {bottom - top > 2 && (
              <rect x={x - 1} y={top + 1} width="3" height={bottom - top - 2} fill={up ? '#50d250' : '#f06868'} />
            )}
          </g>
        );
      })}

      {profile.map(([total, buy, delta], i) => {
        const y = Math.round(166 + i * 19.414);
        const h = Math.floor(179.8 + i * 19.414) - y;
        return (
          <g key={i}>
            <rect x={1631 - total * 8} y={y} width={(total - buy) * 8} height={h} fill="#fcc124" />
            <rect x={1631 - buy * 8} y={y} width={buy * 8} height={h} fill="#1690e6" />
            <rect x="1631" y={y} width={Math.abs(delta) * 8} height={h} fill={delta < 0 ? '#800000' : '#008000'} />
          </g>
        );
      })}

      {/* pane borders */}
      <path
        d="M1855 126.500H222.500V770.500H1855M1855 772.500H222.500V853.500H1855M1855 855.500H222.500V950.500H1855M1854.500 126V771M1854.500 772V854M1854.500 855V951"
        fill="none"
        stroke="#000"
      />
      <path d="M223 805.500H1854M223 824.500H1854" stroke="#708090" strokeDasharray="5 3" />
      <path d="M223 815.500H1390" stroke="#00ffff" />
      <polyline points={toPoints(upper)} fill="none" stroke="#f00" />
      <polyline points={toPoints(lower)} fill="none" stroke="#f00" />
      <polyline points={toPoints(flat)} fill="none" stroke="#ff0" />

      <path d="M1295.500 127V950" stroke="#f00" />
      <path d="M1293.500 127.500h4v4h-4zM1293.500 766.500h4v4h-4z" fill="#fff" stroke="#f00" />

      {prices.map(([p, y]) => (
        <rect key={p} x="1855" y={y} width="3" height="1" fill="#000" />
      ))}
      <path d="M1855 774.500h3M1855 805.500h3M1855 815.500h3M1855 824.500h3M1855 852.500h3M1855 857.500h3M1855 949.500h3" stroke="#000" />
      {Array.from({ length: 13 }, (_, i) => (
        <rect key={i} x={223 + i * 96} y="951" width="1" height="3" fill="#000" />
      ))}
    </g>

    {prices.map(([p, y]) => (
      <text key={p} x="1861" y={y + 5} textLength="46" lengthAdjust="spacingAndGlyphs">{p}</text>
    ))}
    <rect x="1856" y="251" width="56" height="14" fill="#dedede" />
    <text x="1861" y="263" textLength="46" lengthAdjust="spacingAndGlyphs" fill="#c4c4c4">1.16549</text>
    <rect x="1856" y="268" width="56" height="14" fill="#000" />
    <text x="1861" y="280" textLength="46" lengthAdjust="spacingAndGlyphs" fill="#dedede">1.16538</text>

    <text x="227" y="788" textLength="235" lengthAdjust="spacingAndGlyphs">M5 BB flat 0.0000 0.0003 -0.0003 -0.0000</text>
    <text x="227" y="871" textLength="77" lengthAdjust="spacingAndGlyphs">peek+ FILTER</text>
    <text x="1858" y="786" textLength="39">0.0018</text>
    <text x="1858" y="810" textLength="38">0.0004</text>
    <text x="1858" y="820" textLength="25">0.00</text>
    <text x="1857" y="829" textLength="43">-0.0004</text>
    <text x="1858" y="850" textLength="43">-0.0016</text>
    <text x="1858" y="869">0</text>
    <text x="1858" y="947">0</text>

    <text x="222" y="966" textLength="72" lengthAdjust="spacingAndGlyphs">20 Aug 2025</text>
    {Array.from({ length: 12 }, (_, i) => (
      <text key={i} x={318 + i * 96} y="966" textLength="76" lengthAdjust="spacingAndGlyphs">
        {`21 Aug ${String(i).padStart(2, '0')}:35`}
      </text>
    ))}
    <rect x="1240" y="954" width="110" height="14" fill="#f00" />
    <text x="1245" y="966" textLength="100" fill="#fff" lengthAdjust="spacingAndGlyphs">2025.08.21 10:45</text>

    <rect x="1739.500" y="808.500" width="79" height="21" rx="1" fill="#696969" stroke="#000" />
    <text
      x="1744"
      y="825"
      fontSize="16"
      textLength="74"
      lengthAdjust="spacingAndGlyphs"
      fill="#0f0"
      className="font-['Liberation_Sans',Arial,sans-serif]"
    >
      BB flat-off
    </text>

    {/* hand-drawn loop; the ends do not quite meet */}
    <path
      d="M1283 856V854C1275 850 1262 854 1250 860C1240 867 1233 876 1229 889Q1226 898 1228 909C1235 921 1247 934 1262 942Q1275 949 1293 951L1325 957Q1345 960 1356 955Q1371 949 1373 937L1374 913C1370 901 1364 892 1355 883C1345 872 1332 865 1322 862Q1308 860 1295 856"
      fill="none"
      stroke="#d2503f"
      strokeOpacity=".62"
      strokeWidth="11"
      strokeLinecap="round"
      strokeLinejoin="round"
    />
  </svg>
);

const tabs: { label: string; box: string; w: number }[] = [
  { label: 'GBPCHF,M15', box: 'w-[113px]', w: 86 },
  { label: 'GBPCHF,M30', box: 'w-[112px]', w: 86 },
  { label: 'GBPCHF,M5', box: 'w-[104px]', w: 78 },
  { label: 'NZDUSD,M15', box: 'w-[120px]', w: 92 },
  { label: 'NZDUSD,M30', box: 'w-[120px]', w: 92 },
  { label: 'NZDUSD,M5', box: 'w-[112px]', w: 84 },
  { label: 'USDCAD,M15', box: 'w-[120px]', w: 91 },
  { label: 'USDCAD,M30', box: 'w-[120px]', w: 91 },
  { label: 'USDCAD,M5', box: 'w-[112px]', w: 83 },
  { label: 'USDCHF,M15', box: 'w-[116px]', w: 88 },
  { label: 'USDCHF,M30', box: 'w-[116px]', w: 88 },
  { label: 'USDCHF,M5', box: 'w-[108px]', w: 80 },
  { label: 'EURUSD,M15', box: 'w-[116px]', w: 87 },
];

const ChartTabs = () => (
  <div className="flex h-[28px] border-t-2 border-white pr-[8px] text-[15px]">
    <div className="flex w-full border-t border-black">
      <div className="ml-[6px] flex h-[23px] w-[108px] items-center justify-center border-r-2 border-b-2 border-l border-black bg-white">
        <Fit w={79}>EURUSD,M5</Fit>
      </div>
      {tabs.map((t) => (
        <div key={t.label} className={`flex h-[22px] shrink-0 items-center justify-between pl-[12px] text-[#787878] ${t.box}`}>
          <Fit w={t.w}>{t.label}</Fit>
          <div className="h-[18px] w-px bg-[#707070]" />
        </div>
      ))}
      <svg className="mt-[4px] mr-[2px] ml-auto" width="32" height="10" viewBox="0 0 32 10">
        <path d="M6 0v10L1 5z" fill="#000" />
        <path d="M26 0v10l5-5z" fill="#a0a0a0" />
      </svg>
    </div>
  </div>
);

/* ---------- status bar and taskbar ---------- */

const StatusBar = () => (
  <div className="flex h-[28px] items-center border-t border-white text-[15px]">
    <div className="mt-px w-[1024px] pl-[2px]"><Fit w={226}>Для вызова справки нажмите F1</Fit></div>
    <div className="flex h-[24px] w-[149px] items-center border-l border-[#b4b4b4] pl-[5px]"><Fit w={49}>Default</Fit></div>
    <div className="h-[24px] w-[131px] border-l border-[#b4b4b4]" />
    <div className="h-[24px] w-[89px] border-l border-[#b4b4b4]" />
    <div className="h-[24px] w-[89px] border-l border-[#b4b4b4]" />
    <div className="h-[24px] w-[85px] border-l border-[#b4b4b4]" />
    <div className="h-[24px] w-[87px] border-l border-[#b4b4b4]" />
    <div className="h-[24px] w-[84px] border-l border-[#b4b4b4]" />
    <div className="flex h-[24px] flex-1 items-center gap-[4px] border-l border-[#b4b4b4] pl-[5px]">
      <svg width="32" height="17" viewBox="0 0 32 17" className="mb-[3px]">
        {Array.from({ length: 8 }, (_, i) => (
          <g key={i}>
            <rect x={i * 4} y="0" width="3" height={11 - i * 1.2} fill="#5a7a08" />
            <rect x={i * 4} y={12 - i * 1.2} width="3" height={5 + i * 1.2} fill="#9c1c08" />
          </g>
        ))}
      </svg>
      <Fit w={90}>218499/32 kb</Fit>
    </div>
  </div>
);

const TaskApp = ({ children, className = '' }: { children: ReactNode; className?: string }) => (
  <div className={`flex h-[50px] w-[62px] items-center justify-center ${className}`}>{children}</div>
);

const Taskbar = () => (
  <div className="flex h-[50px] bg-[linear-gradient(90deg,#2e2420_0%,#2e2420_44%,#2b2b1e_54%,#282a1a_58%,#1e201c_62%,#2b2c1f_68%,#30241f_77%,#3e362d_85%,#332c23_93%,#2d2a20_100%)] text-white">
    <div className="flex w-[61px] items-center justify-center bg-[#1c2124]">
      <svg width="20" height="20" viewBox="0 0 20 20" fill="#fff">
        <path d="M0 3l8.500-1.300v7.800H0zM9.500 1.500L20 0v9.500H9.500zM0 10.500h8.500v7.800L0 17zM9.500 10.500H20V20l-10.500-1.500z" />
      </svg>
    </div>
    <div className="flex w-[429px] items-center border-x-2 border-t-[3px] border-[#bebebe] bg-[#f1f1f1] pl-[12px]">
      <svg width="22" height="22" viewBox="0 0 22 22" fill="none" stroke="#1a1a1a" strokeWidth="1.600">
        <circle cx="13.500" cy="8" r="6.500" />
        <path d="M9 12.500L1 21" />
      </svg>
      <div className="mb-[2px] ml-[13px] text-[18px] text-[#3a3a3a]"><Fit w={371}>Чтобы начать поиск, введите здесь запрос</Fit></div>
    </div>
    <div className="flex w-[314px] pl-[3px]">
      <TaskApp>
        <svg width="28" height="28" viewBox="0 0 28 28">
          <path d="M8 1l18 5v15L8 17z" fill="#4fb0ee" stroke="#cfe4f2" />
          <path d="M8 17l18 4V6z" fill="#2a8fe0" />
          <path d="M6 20l15 3-4 4-15-3z" fill="#d4dadd" stroke="#8b9499" />
        </svg>
      </TaskApp>
      <TaskApp className="relative">
        <svg width="31" height="31" viewBox="0 0 31 31">
          <defs>
            <linearGradient id="edge" x1="0" x2="1" y1=".3" y2="0">
              <stop offset="0" stopColor="#1b9de2" />
              <stop offset="1" stopColor="#5fdc5a" />
            </linearGradient>
          </defs>
          <circle cx="15.500" cy="15.500" r="15" fill="#0f6fc4" />
          <path d="M1 13C3-3 30-4 30.500 14c0 6-6 8-12 6 3-3 2-9-4-9-6-1-11 1-13.500 6z" fill="url(#edge)" />
          <path d="M18.500 20c-3-2-4-4-3-7-5 2-6 14 5 17 4-1 7-3 9-6-4 2-8 1-11-4z" fill="#0b4b93" />
          <path d="M18.500 20c4 3 9 2 12-1v3l-3 3c-4 1-7-1-9-5z" fill="#2e2420" />
        </svg>
        <div className="absolute bottom-0 left-[6px] h-[3px] w-[51px] bg-[#76b9ed]" />
      </TaskApp>
      <TaskApp>
        <svg width="31" height="31" viewBox="0 0 31 31" fill="none">
          <circle cx="15.500" cy="15.500" r="15.200" fill="#fff" />
          <path d="M22.500 6.500l-7 10" stroke="#ef4ad8" strokeWidth="4" />
          <path d="M8.500 6.500l7 10V26M18.500 12.500l-3 4.500v9" stroke="#fc3f1d" strokeWidth="4" />
        </svg>
      </TaskApp>
      <TaskApp className="relative">
        <svg width="31" height="31" viewBox="0 0 31 31" fill="none">
          <circle cx="15.500" cy="15.500" r="15.200" fill="#2d6bd4" />
          <path d="M11 17.500C8 13 10 7 15.500 7S23 13 20 17.500L15.500 24" stroke="#fff" strokeWidth="3.200" />
          <path d="M15.500 10.500c2 2 2 5 0 7-2-2-2-5 0-7z" fill="#2d6bd4" stroke="#fff" strokeWidth="1.200" />
        </svg>
        <div className="absolute bottom-0 left-[6px] h-[3px] w-[51px] bg-[#76b9ed]" />
      </TaskApp>
      <TaskApp className="relative bg-[#5b524d]">
        <div className="flex h-[30px] w-[30px] items-center justify-center bg-white">
          <LogoIcon size={27} />
        </div>
        <div className="absolute bottom-0 left-0 h-[3px] w-full bg-[#76b9ed]" />
      </TaskApp>
    </div>
    <div className="ml-auto flex items-center">
      <svg width="18" height="10" viewBox="0 0 18 10" fill="none" stroke="#fff" strokeWidth="1.500">
        <path d="M1 9l8-8 8 8" />
      </svg>
      <svg className="ml-[11px]" width="20" height="16" viewBox="0 0 20 16">
        <rect x="4.500" y="4.500" width="13" height="9" fill="#fff" stroke="#fff" />
        <rect x="18" y="7" width="2" height="4" fill="#fff" />
        <path d="M1 3h5v4l-1.500 1.500V13M2 1v2M5 1v2" stroke="#fff" fill="#2a2420" strokeWidth="1.300" />
      </svg>
      <svg className="ml-[12px]" width="17" height="17" viewBox="0 0 17 17" fill="none" stroke="#fff" strokeWidth="1.300">
        <path d="M1 16C1 8 8 1 16 1" opacity=".6" />
        <path d="M5 16C5 10 10 5 16 5M9 16c0-4 3-7 7-7" />
        <circle cx="14.500" cy="14.500" r="1.500" fill="#fff" />
      </svg>
      <svg className="ml-[10px]" width="20" height="16" viewBox="0 0 20 16" fill="none" stroke="#fff" strokeWidth="1.300">
        <path d="M1 5.500h3l4-4v13l-4-4H1zM12 5l6 6M18 5l-6 6" />
      </svg>
      <div className="ml-[15px] text-[15px]"><Fit w={26}>РУС</Fit></div>
      <div className="ml-[18px] flex flex-col items-center text-[15px] leading-[23px]">
        <Fit w={34}>12:08</Fit>
        <Fit w={70}>21.08.2025</Fit>
      </div>
      <svg className="ml-[22px]" width="34" height="34" viewBox="0 0 34 34">
        <path d="M1 2h20v17H11l-4 4v-4H1z" fill="#fff" />
        <path d="M5 7h12M5 10.500h12M5 14h8" stroke="#2a2420" strokeWidth="1.500" />
        <circle cx="20.500" cy="23" r="10" fill="#3a3a38" stroke="#bbb" />
        <text x="20.500" y="28.500" textAnchor="middle" fontSize="15" fill="#fff">1</text>
      </svg>
      <div className="ml-[12px] h-[50px] w-px bg-[#6b665f]" />
      <div className="w-[5px]" />
    </div>
  </div>
);

/* ---------- alert window ---------- */

const alerts: ('BUY' | 'SELL')[] = ['BUY', 'BUY', 'BUY', 'SELL', 'BUY', 'SELL', 'SELL', 'BUY'];

const AlertWindow = () => (
  <div className="absolute top-[127px] left-[11px] h-[466px] w-[552px] border border-[#9a9a9a] bg-[#f0f0f0] shadow-[0_6px_16px_rgba(0,0,0,0.4)]">
    <div className="flex h-[37px] items-center bg-white pb-px text-[15px] text-[#999]">
      <div className="mb-[2px] ml-[10px] flex w-[24px]"><BellIcon /></div>
      <Fit w={41}>Алерт</Fit>
      <svg className="mb-px mr-[23px] ml-auto" width="68" height="14" viewBox="0 0 68 14" fill="none" stroke="#999">
        <path d="M3 4c0-4 6-4 6 0 0 3-3 3-3 6" strokeWidth="1.300" />
        <path d="M6 11.500v1.500" strokeWidth="1.500" />
        <path d="M55.500 1l12 12M67.500 1l-12 12" strokeWidth="1.200" />
      </svg>
    </div>
    <div className="flex h-[185px] font-['DejaVu_Sans_Condensed','DejaVu_Sans',sans-serif] text-[13px] text-black">
      <div className="mt-[15px] ml-[16px]"><BellIcon size={48} /></div>
      <div className="mt-[19px] ml-[18px]"><Fit w={253}>+peek+ FILTER BUY on EURUSD PERIOD_M5</Fit></div>
      <div className="mt-[20px] mr-[9px] ml-auto flex h-[156px] w-[20px] flex-col items-center justify-between border-l border-white py-[7px]">
        <Chevron up color="#c0c0c0" />
        <Chevron color="#c0c0c0" />
      </div>
    </div>
    <div className="ml-[9px] flex h-[196px] w-[532px] overflow-hidden border border-[#828790] bg-white pt-px pl-px font-['DejaVu_Sans_Condensed','DejaVu_Sans',sans-serif] text-[13px] text-black">
      <div className="w-[507px] shrink-0">
        {alerts.map((side, i) => (
          <div key={i} className="flex h-[25px] items-center border-b border-[#c6c6c6] odd:bg-[#ebebeb]">
            <div className="flex h-full w-[125px] items-center border-r border-[#c6c6c6] pl-[4px]">
              <BellIcon />
              <div className="mt-[2px] ml-[5px]"><Fit w={52}>10:46:29</Fit></div>
            </div>
            <div className="mt-[2px] ml-[6px]">
              <Fit w={side === 'BUY' ? 253 : 258}>{`+peek+ FILTER ${side} on EURUSD PERIOD_M5`}</Fit>
            </div>
          </div>
        ))}
      </div>
      <div className="ml-px flex w-[19px] flex-col items-center bg-[#f0f0f0] pt-[7px] pb-[8px]">
        <Chevron up />
        <div className="mt-[6px] h-[21px] w-full bg-[#cdcdcd]" />
        <div className="mt-auto"><Chevron /></div>
      </div>
    </div>
    <div className="mt-[10px] ml-[232px] flex h-[26px] w-[86px] items-center justify-center border border-[#adadad] bg-[#e1e1e1] pt-px font-['DejaVu_Sans_Condensed','DejaVu_Sans',sans-serif] text-[13px]">
      <Fit w={16}>OK</Fit>
    </div>
    <svg className="absolute top-[142px] left-[63px]" width="20" height="83" viewBox="0 0 20 83">
      <path d="M10 1V66" stroke="#d65445" strokeWidth="3" strokeLinecap="round" />
      <path d="M1 63l9 3 9-3-9 19z" fill="#d65445" />
    </svg>
  </div>
);

const App = () => (
  <div className="relative flex h-[1080px] w-[1920px] flex-col overflow-hidden bg-[#f0f0f0] font-['Open_Sans','Noto_Sans',sans-serif] text-black">
    <TitleBar />
    <MenuBar />
    <MainToolbar />
    <DrawToolbar />
    <div className="flex h-[880px] pt-px">
      <div className="flex w-[219px] shrink-0 flex-col border-r border-[#828282] pt-[3px]">
        <MarketWatch />
        <div className="h-[8px]" />
        <Navigator />
        <div className="mr-[3px] ml-[5px] h-px bg-[#a0a0a0]" />
      </div>
      <div className="flex flex-col">
        <Chart />
        <ChartTabs />
      </div>
    </div>
    <StatusBar />
    <Taskbar />
    <AlertWindow />
  </div>
);

export default App;
